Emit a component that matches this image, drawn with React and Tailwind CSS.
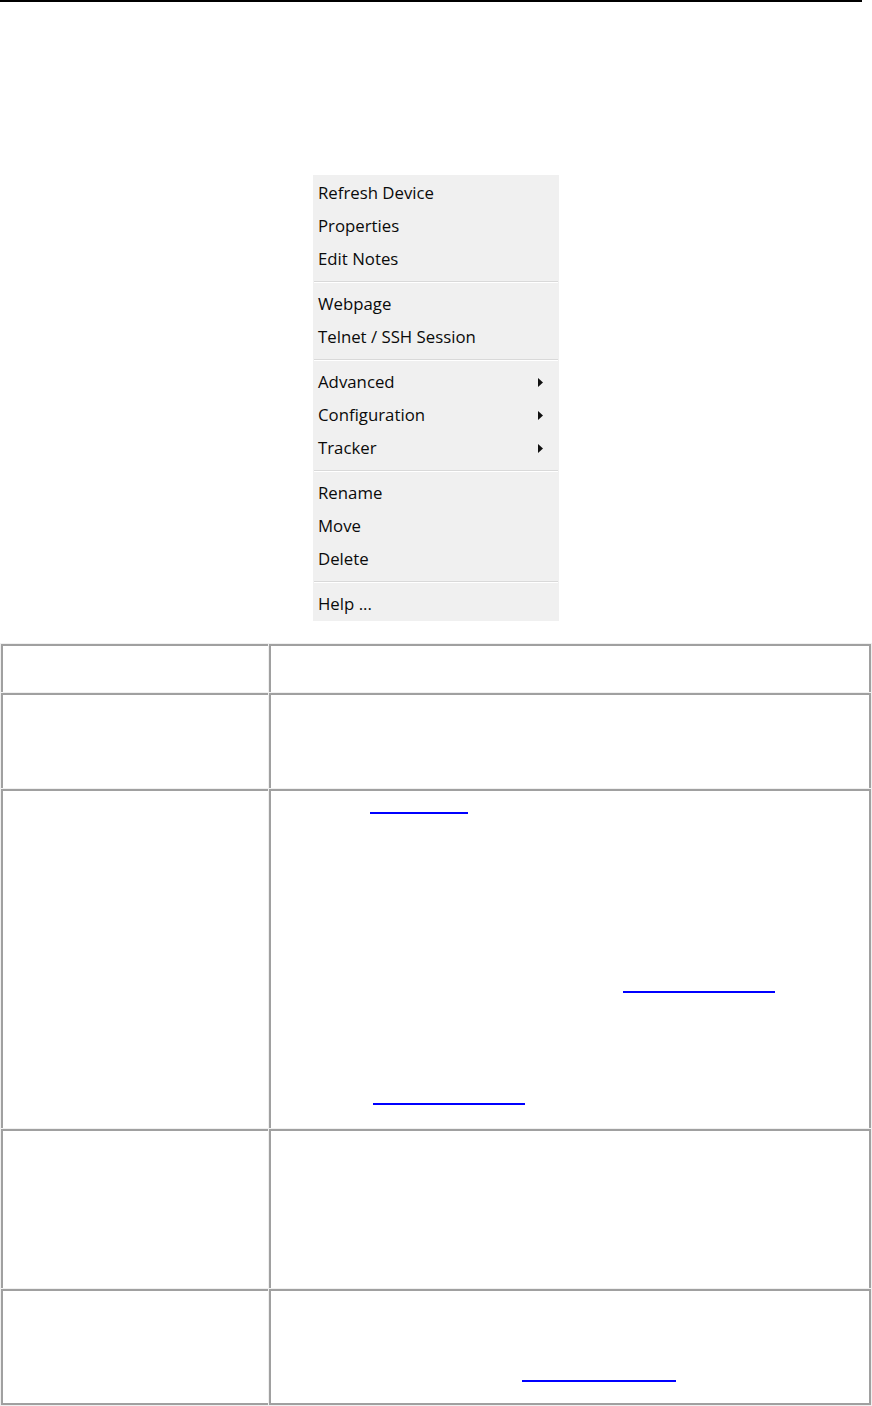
import React from 'react'

const groups = [
  [{label: 'Refresh Device'}, {label: 'Properties'}, {label: 'Edit Notes'}],
  [{label: 'Webpage'}, {label: 'Telnet / SSH Session'}],
  [{label: 'Advanced', sub: true}, {label: 'Configuration', sub: true}, {label: 'Tracker', sub: true}],
  [{label: 'Rename'}, {label: 'Move'}, {label: 'Delete'}],
  [{label: 'Help ...'}],
]

const MenuItem = ({label, sub}) => (
  <div className="h-[33px] flex items-center justify-between pl-[5px] pr-[16px] text-[16.8px] text-[#0a0a0a]">
    <span className="-mt-[2px]">{label}</span>
    {sub && (
      <svg width="5" height="9" viewBox="0 0 5 9">
        <path d="M0 0 L5 4.5 L0 9 Z" fill="#111" />
      </svg>
    )}
  </div>
)

const ContextMenu = () => (
  <div className="mx-auto w-[246px] bg-[#f0f0f0] pt-[2px]" style={{fontFamily: '"Open Sans", "Noto Sans", sans-serif'}}>
    {groups.map((items, i) => (
      <div key={i}>
        {i > 0 && (
          <div className="h-[12px] flex flex-col justify-center px-px">
            <div className="h-px bg-[#d9d9d9]"></div>
            <div className="h-px bg-white"></div>
          </div>
        )}
        {items.map((it) => <MenuItem key={it.label} {...it} />)}
      </div>
    ))}
  </div>
)

// blank link underline, the text itself is not rendered in the source
const Link = ({mt, ml, w}) => (
  <div style={{marginTop: mt, marginLeft: ml, width: w}} className="h-[2px] bg-[#0000ff]"></div>
)

const Row = ({h, last, children}) => (
  <div style={{height: h}} className="flex gap-px">
    <div className={`w-[267px] bg-white border-l-2 border-t-2 border-[#a0a0a0] ${last ? 'border-b-2' : ''}`}></div>
    <div className={`flex-1 bg-white border-l-2 border-t-2 border-r-2 border-[#a0a0a0] ${last ? 'border-b-2' : ''}`}>
      {children}
    </div>
  </div>
)

export default function App() {
  return (
    <div className="w-[872px] h-[1406px] bg-white overflow-hidden">
      <div className="h-[2px] w-[862px] bg-black"></div>
      <div className="mt-[173px]">
        <ContextMenu />
      </div>
      <div className="mt-[22px] w-[872px] bg-[#f0f0f0] p-px flex flex-col gap-px">
        <Row h={48} />
        <Row h={95} />
        <Row h={339}>
          <Link mt={21} ml={99} w={98} />
          <Link mt={177} ml={352} w={152} />
          <Link mt={110} ml={102} w={152} />
        </Row>
        <Row h={159} />
        <Row h={116} last>
          <Link mt={89} ml={251} w={154} />
        </Row>
      </div>
    </div>
  )
}
